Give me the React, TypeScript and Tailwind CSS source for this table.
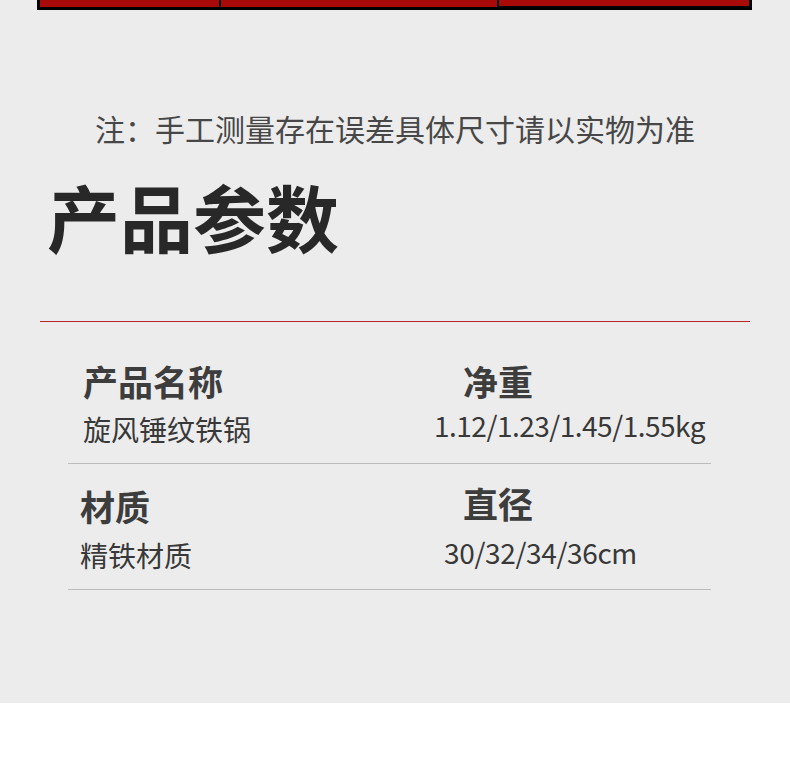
import React from "react";

const cjk = { fontFamily: '"Noto Sans CJK SC", "Noto Sans", sans-serif' };

// 参数表的一格：标题 + 数值，每格自己的偏移
type Cell = {
  title: string;
  value: string;
  titleMl: string;
  valueMl: string;
  pt: string;
  gap: string;
  track?: string;
};

const ParamCell = ({ c }: { c: Cell }) => (
  <div className={`flex flex-col ${c.pt}`}>
    <div className={`text-[35px] leading-none font-bold text-[#3d3d3d] whitespace-nowrap ${c.titleMl}`}>{c.title}</div>
    <div className={`text-[28px] leading-none text-[#383838] whitespace-nowrap ${c.gap} ${c.valueMl} ${c.track ?? ""}`}>{c.value}</div>
  </div>
);

const App = () => {
  return (
    <div className="w-[790px] min-h-[772px] bg-white" style={cjk}>
      <div className="h-[703px] bg-[#ececec] flex flex-col">
        {/* 上方红色表格的底边 */}
        <div className="ml-[37px] w-[715px] h-[10px] bg-black flex gap-[2px] px-[3px] pb-[3px]">
          <div className="w-[179px] bg-[#a80a0a]" />
          <div className="w-[276px] bg-[#a80a0a]" />
          <div className="flex-1 bg-[#a80a0a] mb-[1px]" />
        </div>

        {/* 注释 */}
        <p className="mt-[103px] text-[30px] leading-none text-center text-[#474747]">
          注：手工测量存在误差具体尺寸请以实物为准
        </p>

        {/* 标题 */}
        <h1 className="mt-[36px] pl-[47px] text-[73px] leading-none font-bold text-[#282828]">产品参数</h1>

        <div className="mt-[69px] ml-[40px] w-[710px] h-px bg-[#b5262a]" />

        {/* 第一行 */}
        <div className="ml-[68px] w-[643px] h-[142px] border-b border-[#bcbcbc] grid grid-cols-[340px_1fr]">
          <ParamCell c={{ title: "产品名称", value: "旋风锤纹铁锅", titleMl: "ml-[15px]", valueMl: "ml-[15px]", pt: "pt-[41px]", gap: "mt-[17px]" }} />
          <ParamCell c={{ title: "净重", value: "1.12/1.23/1.45/1.55kg", titleMl: "ml-[55px]", valueMl: "ml-[26px]", pt: "pt-[41px]", gap: "mt-[13px]", track: "tracking-[-0.5px]" }} />
        </div>

        {/* 第二行 */}
        <div className="ml-[68px] w-[643px] h-[126px] border-b border-[#bcbcbc] grid grid-cols-[340px_1fr]">
          <ParamCell c={{ title: "材质", value: "精铁材质", titleMl: "ml-[12px]", valueMl: "ml-[12px]", pt: "pt-[24px]", gap: "mt-[18px]" }} />
          <ParamCell c={{ title: "直径", value: "30/32/34/36cm", titleMl: "ml-[55px]", valueMl: "ml-[36px]", pt: "pt-[21px]", gap: "mt-[18px]", track: "tracking-[-0.35px]" }} />
        </div>
      </div>
    </div>
  );
};

export default App;
